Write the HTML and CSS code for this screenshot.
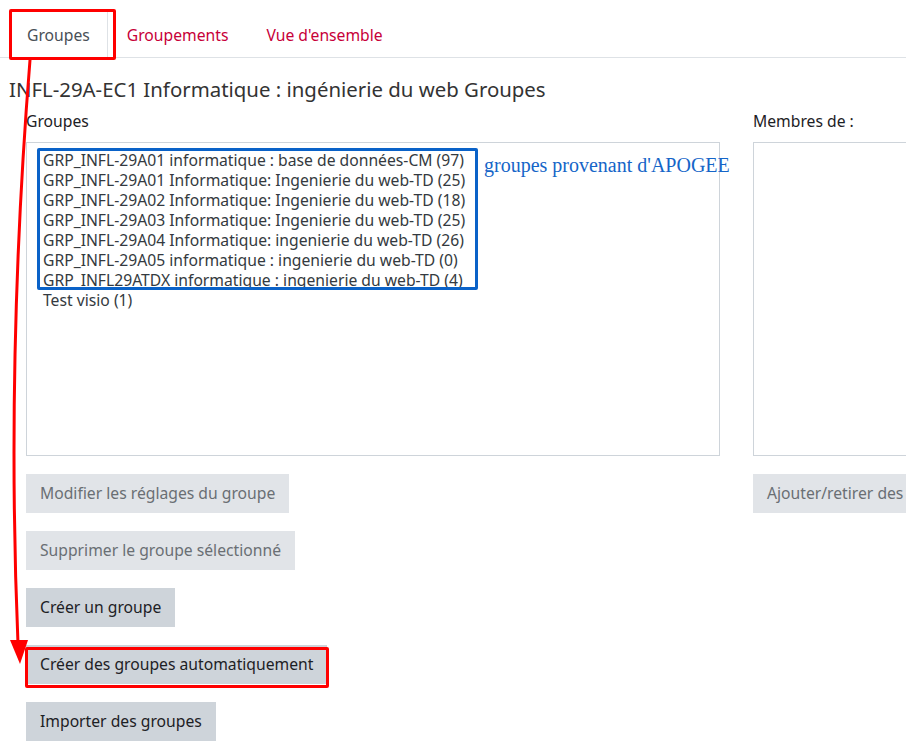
FILE: index.html
```html
<!DOCTYPE html>
<html lang="fr">
<head>
<meta charset="utf-8">
<link rel="stylesheet" href="styles.css">
</head>
<body>
<div class="page">
  <ul class="tabs">
    <li class="tab active">Groupes<span class="red-box"></span></li>
    <li class="tab">Groupements</li>
    <li class="tab">Vue d'ensemble</li>
  </ul>
  <h2 class="title">INFL-29A-EC1 Informatique : ingénierie du web Groupes</h2>
  <div class="columns">
    <div class="col">
      <div class="label">Groupes</div>
      <div class="select">
        <div class="opt">GRP_INFL-29A01 informatique : base de données-CM (97)</div>
        <div class="opt">GRP_INFL-29A01 Informatique: Ingenierie du web-TD (25)</div>
        <div class="opt">GRP_INFL-29A02 Informatique: Ingenierie du web-TD (18)</div>
        <div class="opt">GRP_INFL-29A03 Informatique: Ingenierie du web-TD (25)</div>
        <div class="opt">GRP_INFL-29A04 Informatique: ingenierie du web-TD (26)</div>
        <div class="opt">GRP_INFL-29A05 informatique : ingenierie du web-TD (0)</div>
        <div class="opt">GRP_INFL29ATDX informatique : ingenierie du web-TD (4)</div>
        <div class="opt">Test visio (1)</div>
        <span class="blue-box"></span>
        <span class="note">groupes provenant d'APOGEE</span>
      </div>
      <div class="buttons">
        <span class="btn disabled">Modifier les réglages du groupe</span>
        <span class="btn disabled">Supprimer le groupe sélectionné</span>
        <span class="btn">Créer un groupe</span>
        <span class="btn marked">Créer des groupes automatiquement<span class="red-box2"></span></span>
        <span class="btn">Importer des groupes</span>
      </div>
    </div>
    <div class="col">
      <div class="label">Membres de :</div>
      <div class="select"></div>
      <div class="buttons">
        <span class="btn disabled">Ajouter/retirer des</span>
      </div>
    </div>
  </div>
</div>
<svg class="arrow" width="60" height="680" viewBox="0 0 60 680">
  <path d="M30 60 Q6 360 18 644" fill="none" stroke="#ff0000" stroke-width="3"/>
  <polygon points="10,640 28,640 20,664" fill="#ff0000"/>
</svg>
</body>
</html>
```
FILE: styles.css
```css
html, body {
  margin: 0;
  padding: 0;
  background: #fff;
  overflow: hidden;
}
body {
  font-family: "Noto Sans", "DejaVu Sans", sans-serif;
  font-size: 15.7px;
  color: #1d2125;
}
.page {
  width: 906px;
  overflow: hidden;
  position: relative;
}
.tabs {
  list-style: none;
  margin: 10px 0 0 0;
  padding: 0 0 0 10px;
  display: flex;
  border-bottom: 1px solid #dee2e6;
}
.tab {
  position: relative;
  padding: 1px 18px 0;
  height: 45px;
  line-height: 46px;
  color: #c70039;
  border: 1px solid transparent;
  border-bottom: none;
  margin-bottom: -1px;
}
.tab.active {
  padding: 1px 17px 0 16px;
  color: #495057;
  background: #fff;
  border-color: #dee2e6;
  height: 46px;
}
.red-box {
  position: absolute;
  left: -2px;
  top: -2px;
  right: -9px;
  bottom: -2px;
  border: 3px solid #ff0000;
  border-radius: 2px;
}
.title {
  margin: 19px 0 0 9px;
  font-size: 20.4px;
  font-weight: normal;
  line-height: 24px;
  color: #333;
}
.columns {
  display: flex;
  gap: 33px;
  padding-left: 26px;
  margin-top: 9px;
}
.col {
  flex: 0 0 694px;
}
.label {
  height: 22px;
  line-height: 22px;
  color: #1d2125;
}
.select {
  position: relative;
  margin-top: 10px;
  height: 305px;
  border: 1px solid #ced4da;
  padding: 7px 0 0 16px;
  box-sizing: content-box;
}
.col .select {
  width: 676px;
}
.opt {
  line-height: 20px;
  height: 20px;
  white-space: nowrap;
  color: #343a40;
}
.blue-box {
  position: absolute;
  left: 10px;
  top: 5px;
  width: 435px;
  height: 136px;
  border: 3px solid #0a62c8;
  border-radius: 2px;
}
.note {
  position: absolute;
  left: 457px;
  top: 11px;
  font-family: "Liberation Serif", "Times New Roman", serif;
  font-size: 20px;
  color: #1565c8;
  white-space: nowrap;
}
.buttons {
  display: flex;
  flex-direction: column;
  align-items: flex-start;
  gap: 18px;
  margin-top: 18px;
}
.btn {
  position: relative;
  display: inline-block;
  height: 39px;
  line-height: 39px;
  padding: 0 14px;
  background: #ced4da;
  color: #1d2125;
  white-space: nowrap;
}
.btn.disabled {
  background: #e1e4e8;
  color: #6a6f74;
}
.red-box2 {
  position: absolute;
  left: -1px;
  top: 2px;
  right: -2px;
  bottom: -4px;
  border: 3px solid #ff0000;
  border-radius: 2px;
}
.arrow {
  position: absolute;
  left: 0;
  top: 0;
}
```
